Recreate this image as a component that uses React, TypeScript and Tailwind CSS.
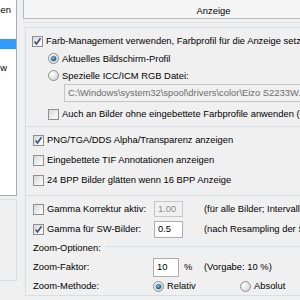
import React from 'react';

function Check({ checked = false }: { checked?: boolean }) {
  return (
    <span className="w-[11px] h-[11px] shrink-0 border border-[#8e8f8f] bg-linear-to-br from-[#d8d8d8] to-white flex items-center justify-center">
      {checked && (
        <svg width="9" height="9" viewBox="0 0 9 9">
          <path d="M1.5 4.5 L3.5 7 L7.5 1.2" fill="none" stroke="#3c4f7c" strokeWidth="1.6" />
        </svg>
      )}
    </span>
  );
}

function Radio({ checked = false }: { checked?: boolean }) {
  return (
    <svg width="11" height="11" viewBox="0 0 11 11" className="shrink-0">
      <defs>
        <radialGradient id="rg" cx="0.35" cy="0.35" r="0.8">
          <stop offset="0" stopColor="#ffffff" />
          <stop offset="1" stopColor="#d0d0d0" />
        </radialGradient>
        <radialGradient id="dot" cx="0.4" cy="0.35" r="0.7">
          <stop offset="0" stopColor="#6fc0e0" />
          <stop offset="1" stopColor="#12506f" />
        </radialGradient>
      </defs>
      <circle cx="5.5" cy="5.5" r="5" fill="url(#rg)" stroke="#8e8f8f" strokeWidth="1" />
      {checked && <circle cx="5.5" cy="5.5" r="2.8" fill="url(#dot)" />}
    </svg>
  );
}

export default function App() {
  return (
    <div className="w-[300px] h-[300px] overflow-hidden bg-[#f0f0f0] flex text-[9.4px] text-black font-['Liberation_Sans',Arial,sans-serif] leading-none">
      {/* left list */}
      <div className="w-[17px] shrink-0 flex flex-col">
        <div className="h-[196px] bg-white border-r border-b border-[#a5acb5] flex flex-col overflow-hidden">
          <div className="h-[20px] flex items-center justify-end pr-[5px] whitespace-nowrap">Start-Optionen</div>
          <div className="h-[19px]" />
          <div className="h-[10px] bg-[#3399ff]" />
          <div className="h-[10px]" />
          <div className="h-[18px] flex items-center justify-end pr-[9px] whitespace-nowrap">Zoom/Slideshow</div>
        </div>
        <div className="mt-[3px] h-[82px] border-r border-t border-b border-[#d5dfe5]" />
      </div>

      {/* right side */}
      <div className="ml-[6px] w-[380px] shrink-0 flex flex-col">
        <div className="h-[19px] border-l border-b border-[#b9b9b9] bg-[#f5f5f5] flex items-center justify-center pt-[3px]">
          Anzeige
        </div>
        <div className="h-[4px] border-b border-[#e3e3e3]" />
        <div className="mt-[4px] ml-[2px] border-l border-t border-[#d5dfe5] flex flex-col">
          {/* color management */}
          <div className="mt-[4px] h-[18px] flex items-center pl-[6px] gap-[3px]">
            <Check checked />
            <span>Farb-Management verwenden, Farbprofil für die Anzeige setzen</span>
          </div>
          <div className="h-[17px] flex items-center pl-[22px] gap-[3px]">
            <Radio checked />
            <span>Aktuelles Bildschirm-Profil</span>
          </div>
          <div className="h-[17px] flex items-center pl-[22px] gap-[3px]">
            <Radio />
            <span>Spezielle ICC/ICM RGB Datei:</span>
          </div>
          <div className="ml-[38px] h-[18px] border border-[#c5c5c5] flex items-center pl-[3px] text-[#6d6d6d] whitespace-nowrap">
            C:\Windows\system32\spool\drivers\color\Eizo S2233W.icm
          </div>
          <div className="h-[24px] flex items-center pl-[22px] gap-[3px]">
            <Check />
            <span>Auch an Bilder ohne eingebettete Farbprofile anwenden (langsamer)</span>
          </div>

          {/* display flags */}
          <div className="border-t border-[#d5dfe5] pt-[3px] pb-[5px] flex flex-col">
            <div className="h-[20px] flex items-center pl-[7px] gap-[3px]">
              <Check checked />
              <span>PNG/TGA/DDS Alpha/Transparenz anzeigen</span>
            </div>
            <div className="h-[20px] flex items-center pl-[7px] gap-[3px]">
              <Check />
              <span>Eingebettete TIF Annotationen anzeigen</span>
            </div>
            <div className="h-[20px] flex items-center pl-[7px] gap-[3px]">
              <Check />
              <span>24 BPP Bilder glätten wenn 16 BPP Anzeige</span>
            </div>
          </div>

          {/* gamma + zoom */}
          <div className="border-t border-[#d5dfe5] pt-[3px] flex flex-col">
            <div className="h-[20px] flex items-center pl-[7px]">
              <Check />
              <span className="ml-[3px] w-[107px]">Gamma Korrektur aktiv:</span>
              <span className="w-[29px] h-[16px] border border-[#c5c5c5] flex items-center pl-[3px] text-[#8a8a8a]">1.00</span>
              <span className="ml-[21px] whitespace-nowrap">(für alle Bilder; Intervall: 0.01 - 6.99)</span>
            </div>
            <div className="h-[20px] flex items-center pl-[7px]">
              <Check checked />
              <span className="ml-[3px] w-[107px]">Gamma für SW-Bilder:</span>
              <span className="w-[29px] h-[17px] border border-[#abadb3] bg-white flex items-center pl-[3px]">0.5</span>
              <span className="ml-[21px] whitespace-nowrap">(nach Resampling der SW-Bilder)</span>
            </div>
            <div className="h-[18px] flex items-center pl-[7px] gap-[4px]">
              <span>Zoom-Optionen:</span>
              <span className="flex-1 h-px bg-[#d5dfe5] self-start mt-[7px]" />
            </div>
            <div className="h-[20px] flex items-center pl-[7px]">
              <span className="w-[120px]">Zoom-Faktor:</span>
              <span className="w-[26px] h-[19px] border border-[#abadb3] bg-white flex items-center pl-[3px]">10</span>
              <span className="ml-[5px] w-[20px]">%</span>
              <span>(Vorgabe: 10 %)</span>
            </div>
            <div className="h-[19px] flex items-center pl-[7px] border-b border-[#d5dfe5]">
              <span className="w-[120px]">Zoom-Methode:</span>
              <Radio checked />
              <span className="ml-[3px] w-[73px]">Relativ</span>
              <Radio />
              <span className="ml-[3px]">Absolut</span>
            </div>
          </div>
        </div>
      </div>
    </div>
  );
}
